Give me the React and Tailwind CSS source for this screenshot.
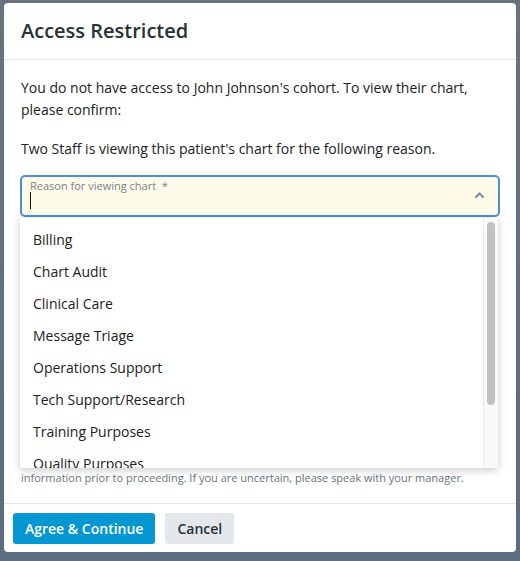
export default function App() {
  const items = [
    "Billing",
    "Chart Audit",
    "Clinical Care",
    "Message Triage",
    "Operations Support",
    "Tech Support/Research",
    "Training Purposes",
    "Quality Purposes",
    "Other",
  ];
  return (
    <div
      className="w-[520px] h-[561px] bg-gradient-to-b from-[#6a727d] to-[#5c6d7f] pt-[3px] px-[4px] overflow-hidden"
      style={{ fontFamily: '"Open Sans", "Liberation Sans", sans-serif' }}
    >
      <div className="w-[512px] h-[549px] bg-white rounded-[4px] flex flex-col overflow-hidden">
        <div className="shrink-0 h-[57px] px-[17px] flex items-center border-b border-[#e3e6e8]">
          <h1 className="text-[20px] font-semibold text-[#263238] leading-none">Access Restricted</h1>
        </div>
        <div className="relative flex-1 min-h-0 px-[16px] pt-[17px] text-[14px] leading-[22px] text-[#212121]">
          <p className="pl-[1px]">You do not have access to John Johnson's cohort. To view their chart, please confirm:</p>
          <p className="pl-[1px] mt-[17px]">Two Staff is viewing this patient's chart for the following reason.</p>
          <div className="relative mt-[15px] h-[42px] rounded-[5px] border-2 border-[#4a90e2] bg-[#fffbea]">
            <div className="absolute left-[8px] top-[2px] text-[11px] leading-[14px] text-[#78828a]">
              Reason for viewing chart&nbsp; *
            </div>
            <div className="absolute left-[8px] top-[15px] w-[1px] h-[17px] bg-[#111]" />
            <svg className="absolute right-[14px] top-[15px]" width="9" height="6" viewBox="0 0 9 6">
              <path d="M1 5 L4.5 1.5 L8 5" fill="none" stroke="#7b8a96" strokeWidth="2" strokeLinecap="round" />
            </svg>
          </div>
          <div className="pl-[1px] mt-[234px] text-[11px] leading-[18px] text-[#6b747b] whitespace-nowrap">
            <div>Please ensure you have an appropriate reason to access this patient's protected health</div>
            <div>information prior to proceeding. If you are uncertain, please speak with your manager.</div>
          </div>
          <div className="absolute left-[16px] top-[158px] w-[478px] h-[250px] bg-white shadow-[0_2px_8px_rgba(0,0,0,0.22)] rounded-[2px] overflow-hidden flex">
            <div className="flex-1 pt-[6px]">
              {items.map((it) => (
                <div key={it} className="h-[32px] flex items-center pl-[13px] text-[14px] text-[#212121]">
                  {it}
                </div>
              ))}
            </div>
            <div className="w-[15px] border-l border-[#ececec] bg-[#fafafa] pt-[4px] flex justify-center">
              <div className="w-[8px] h-[183px] rounded-full bg-[#c1c1c1]" />
            </div>
          </div>
        </div>
        <div className="shrink-0 h-[49px] border-t border-[#e3e6e8] px-[9px] flex items-center gap-[10px]">
          <button className="h-[31px] px-[12px] rounded-[3px] bg-[#0497d1] text-white text-[14px] font-semibold">
            Agree &amp; Continue
          </button>
          <button className="h-[31px] px-[12px] rounded-[3px] bg-[#e4e8eb] text-[#263238] text-[14px] font-semibold">
            Cancel
          </button>
        </div>
      </div>
    </div>
  );
}
